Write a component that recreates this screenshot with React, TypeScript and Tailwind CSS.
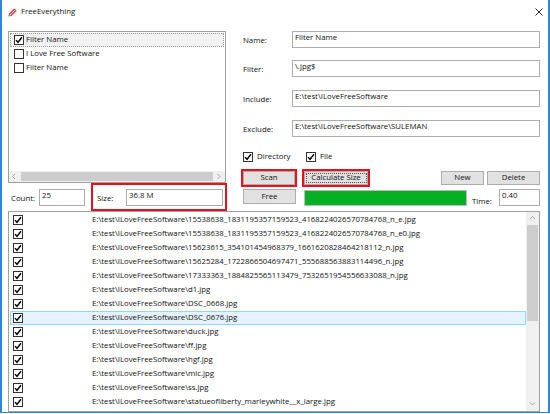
import React from "react";

const BASE = "E:\\test\\ILoveFreeSoftware\\";

const FILES = [
  "15538638_1831195357159523_4168224026570784768_n_e.jpg",
  "15538638_1831195357159523_4168224026570784768_n_e0.jpg",
  "15623615_354101454968379_1661620828464218112_n.jpg",
  "15625284_1722866504697471_555688563883114496_n.jpg",
  "17333363_1884825565113479_7532651954556633088_n.jpg",
  "d1.jpg",
  "DSC_0668.jpg",
  "DSC_0676.jpg",
  "duck.jpg",
  "ff.jpg",
  "hgf.jpg",
  "mic.jpg",
  "ss.jpg",
  "statueofliberty_marleywhite__x_large.jpg",
];

const Check = ({ on }: { on: boolean }) => (
  <span className="flex h-[10px] w-[10px] shrink-0 items-center justify-center border border-[#333333] bg-white">
    {on && (
      <svg width="8" height="8" viewBox="0 0 8 8">
        <path d="M1 4.1 L3 6.3 L7 1.2" fill="none" stroke="#000" strokeWidth="1.4" />
      </svg>
    )}
  </span>
);

const Field = ({ value, className = "" }: { value: string; className?: string }) => (
  <div className={"h-[17px] border border-[#abadb3] bg-white pl-[2px] leading-[11px] " + className}>{value}</div>
);

const Btn = ({ label, className = "" }: { label: string; className?: string }) => (
  <div className={"flex shrink-0 items-center justify-center border border-[#adadad] bg-[#e1e1e1] " + className}>
    {label}
  </div>
);

const Row = ({ label, value, top }: { label: string; value: string; top: string }) => (
  <div className={"flex h-[17px] items-center " + top}>
    <span className="w-[49px] shrink-0 pt-[2px]">{label}</span>
    <Field value={value} className="flex-1" />
  </div>
);

const Chevron = ({ dir }: { dir: "up" | "down" | "left" | "right" }) => {
  const d = {
    up: "M1 4 L3.5 1.5 L6 4",
    down: "M1 1.5 L3.5 4 L6 1.5",
    left: "M4 1 L1.5 3.5 L4 6",
    right: "M1.5 1 L4 3.5 L1.5 6",
  }[dir];
  return (
    <svg width="7" height="7" viewBox="0 0 7 7">
      <path d={d} fill="none" stroke="#a3a3a3" strokeWidth="1" />
    </svg>
  );
};

export default function App() {
  return (
    <div className="h-[414px] w-[550px] overflow-hidden bg-white font-['Open_Sans','Noto_Sans',sans-serif] text-[7.8px] text-[#111]">
      <div className="flex h-[413px] w-[550px] flex-col border-b border-l-2 border-r-2 border-[#2b88d8]">
        {/* title bar */}
        <div className="flex h-[24px] shrink-0 items-center pl-[5px] pr-[5px]">
          <svg width="10" height="9" viewBox="0 0 10 9">
            <path d="M2 6.5 L7.5 1" stroke="#e3262f" strokeWidth="1.2" />
            <path d="M3.5 8 L9 2.5" stroke="#e3262f" strokeWidth="1.2" />
            <path d="M7.5 1 L9 2.5" stroke="#e3262f" strokeWidth="1" />
            <path d="M0.5 8.5 L2 6.5 L3.5 8 Z" fill="#8a8a8a" />
          </svg>
          <span className="ml-[4px]">FreeEverything</span>
          <svg className="ml-auto" width="8" height="8" viewBox="0 0 8 8">
            <path d="M0.5 0.5 L7.5 7.5 M7.5 0.5 L0.5 7.5" stroke="#111" strokeWidth="0.9" />
          </svg>
        </div>

        {/* client */}
        <div className="flex flex-1 flex-col pl-[6px] pr-[8px] pt-[7px]">
          <div className="flex h-[180px] shrink-0">
            {/* left column */}
            <div className="flex w-[218px] shrink-0 flex-col">
              <div className="flex h-[152px] flex-col border border-[#a0a0a0] bg-white">
                <div className="flex-1 pt-px">
                  <div className="mx-px flex h-[14px] items-center gap-[2px] border border-dotted border-[#9a9a9a] bg-[#f2f2f2] pl-[3px]">
                    <Check on />
                    <span>Filter Name</span>
                  </div>
                  <div className="mx-px flex h-[14px] items-center gap-[2px] pl-[4px]">
                    <Check on={false} />
                    <span>I Love Free Software</span>
                  </div>
                  <div className="mx-px flex h-[14px] items-center gap-[2px] pl-[4px]">
                    <Check on={false} />
                    <span>Filter Name</span>
                  </div>
                </div>
                <div className="flex h-[11px] items-center bg-[#f0f0f0]">
                  <span className="flex w-[11px] justify-center">
                    <Chevron dir="left" />
                  </span>
                  <span className="mx-px h-[9px] flex-1 bg-[#cdcdcd]" />
                  <span className="flex w-[11px] justify-center">
                    <Chevron dir="right" />
                  </span>
                </div>
              </div>
              <div className="flex h-[28px] items-center">
                <span className="w-[31px] shrink-0 pl-[3px] pt-[3px]">Count:</span>
                <Field value="25" className="w-[46px] shrink-0" />
                <div className="ml-[6px] flex h-[28px] w-[136px] shrink-0 items-center border-2 border-[#e8101c] pl-[4px]">
                  <span className="w-[29px] shrink-0 pt-[3px]">Size:</span>
                  <Field value="36.8 M" className="w-[97px] shrink-0" />
                </div>
              </div>
            </div>

            {/* right column */}
            <div className="ml-[17px] flex flex-1 flex-col">
              <Row label="Name:" value="Filter Name" top="" />
              <Row label="Filter:" value="\.jpg$" top="mt-[12px]" />
              <Row label="Include:" value={"E:\\test\\ILoveFreeSoftware"} top="mt-[13px]" />
              <Row label="Exclude:" value={"E:\\test\\ILoveFreeSoftware\\SULEMAN"} top="mt-[13px]" />

              <div className="mt-[14px] flex h-[12px] items-center">
                <div className="flex w-[63px] items-center gap-[4px]">
                  <Check on />
                  <span>Directory</span>
                </div>
                <div className="flex items-center gap-[4px]">
                  <Check on />
                  <span>File</span>
                </div>
              </div>

              <div className="mt-[6px] flex h-[18px] items-center">
                <div className="-ml-[2px] flex h-[18px] w-[56px] shrink-0 border-2 border-[#e8101c]">
                  <Btn label="Scan" className="h-[14px] w-[52px]" />
                </div>
                <div className="ml-[5px] flex h-[18px] w-[68px] shrink-0 border-2 border-[#e8101c]">
                  <div className="flex h-[14px] w-[64px] items-center justify-center border border-[#adadad] bg-[#e1e1e1]">
                    <span className="flex h-[10px] w-[61px] items-center justify-center whitespace-nowrap border border-dotted border-[#555]">
                      Calculate Size
                    </span>
                  </div>
                </div>
                <Btn label="New" className="ml-auto h-[14px] w-[43px]" />
                <Btn label="Delete" className="ml-[3px] h-[14px] w-[53px]" />
              </div>

              <div className="mt-[2px] flex h-[18px] items-start">
                <Btn label="Free" className="h-[15px] w-[53px]" />
                <div className="ml-[8px] mt-px h-[16px] w-[163px] shrink-0 border border-[#bcbcbc] bg-[#e6e6e6]">
                  <div className="h-full w-full bg-[#06b025]" />
                </div>
                <span className="ml-[5px] w-[27px] shrink-0 pt-[7px]">Time:</span>
                <Field value="0.40" className="flex-1" />
              </div>
            </div>
          </div>

          {/* file list */}
          <div className="flex h-[201px] shrink-0 overflow-hidden border border-[#a0a0a0] bg-white">
            <div className="flex-1 overflow-hidden pt-px">
              {FILES.map((f, i) => (
                <div
                  key={f}
                  className={
                    i === 7
                      ? "ml-px flex h-[14px] items-center border border-[#99d1ff] bg-[#e5f3ff]"
                      : "ml-px flex h-[14px] items-center border border-transparent"
                  }
                >
                  <span className="flex w-[81px] shrink-0 pl-[2px]">
                    <Check on />
                  </span>
                  <span className="whitespace-nowrap">{BASE + f}</span>
                </div>
              ))}
            </div>
            <div className="flex w-[13px] shrink-0 flex-col bg-[#f0f0f0]">
              <span className="flex h-[13px] items-center justify-center">
                <Chevron dir="up" />
              </span>
              <span className="mx-px h-[96px] bg-[#cdcdcd]" />
              <span className="mt-auto flex h-[13px] items-center justify-center">
                <Chevron dir="down" />
              </span>
            </div>
          </div>
        </div>
      </div>
    </div>
  );
}
